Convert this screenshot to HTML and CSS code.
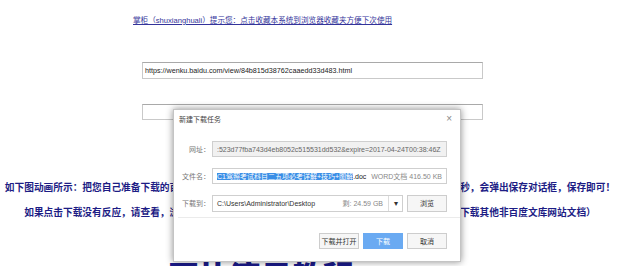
FILE: index.html
```html
<!DOCTYPE html>
<html lang="zh-CN">
<head>
    <meta charset="UTF-8">
    <title>百度文库下载</title>
    <link rel="stylesheet" href="styles.css">
</head>
<body>
    <div class="page">
        <a class="top-tip" href="#">掌柜（shuxianghuali）提示您：点击收藏本系统到浏览器收藏夹方便下次使用</a>

        <div class="url-box">https://wenku.baidu.com/view/84b815d38762caaedd33d483.html</div>
        <div class="result-box"></div>

        <p class="help-line line-one">如下图动画所示：把您自己准备下载的百度文库网址复制粘贴到上面的输入框，然后点击下载按钮，等待几秒，会弹出保存对话框，保存即可！</p>
        <p class="help-line line-two">如果点击下载没有反应，请查看，浏览器是否拦截了弹出窗口或更换其他浏览器重试！（本站暂不支持下载其他非百度文库网站文档）</p>

        <h1 class="big-title">图片演示教程</h1>

        <!-- download dialog lies over the page -->
        <div class="dialog">
            <div class="dialog-head">
                <span class="dialog-title">新建下载任务</span>
                <span class="dialog-close">×</span>
            </div>
            <div class="dialog-body">
                <div class="field-row">
                    <span class="field-label">网址：</span>
                    <div class="field field-readonly">:523d77fba743d4eb8052c515531dd532&amp;expire=2017-04-24T00:38:46Z</div>
                </div>
                <div class="field-row">
                    <span class="field-label">文件名：</span>
                    <div class="field">
                        <span class="file-name"><span class="selected">C1驾照考试科目二五项必考详解+技巧+图解</span>.doc</span>
                        <span class="field-note">WORD文档 416.50 KB</span>
                    </div>
                </div>
                <div class="field-row">
                    <span class="field-label">下载到：</span>
                    <div class="field field-path">
                        <span class="path-text">C:\Users\Administrator\Desktop</span>
                        <span class="field-note">剩: 24.59 GB</span>
                        <span class="path-drop">&#9662;</span>
                    </div>
                    <button class="btn btn-browse">浏览</button>
                </div>
            </div>
            <div class="dialog-foot">
                <button class="btn">下载并打开</button>
                <button class="btn btn-primary">下载</button>
                <button class="btn">取消</button>
            </div>
        </div>
    </div>
</body>
</html>
```

FILE: styles.css
```css
* {
    margin: 0;
    padding: 0;
    box-sizing: border-box;
}

body {
    background: #fff;
    font-family: 'Liberation Sans', 'Noto Sans CJK SC', sans-serif;
    overflow: hidden;
}

.page {
    position: relative;
    width: 620px;
    height: 266px;
    overflow: hidden;
    text-align: center;
}

.top-tip {
    display: block;
    margin-top: 15px;
    padding-left: 133px;
    height: 12px;
    line-height: 12px;
    font-size: 7.6px;
    color: #33339a;
    text-align: left;
    text-decoration: underline;
}

.url-box {
    width: 341px;
    height: 17px;
    margin: 35px 0 0 142px;
    padding-left: 2px;
    border: 1px solid #c9c9c9;
    border-top-color: #a9a9a9;
    font-size: 7.2px;
    line-height: 15px;
    color: #222;
    text-align: left;
}

.result-box {
    width: 341px;
    height: 16px;
    margin: 25px 0 0 142px;
    border: 1px solid #c9c9c9;
    border-top-color: #a9a9a9;
}

.help-line {
    font-family: 'Noto Sans CJK SC', sans-serif;
    font-size: 9.7px;
    font-weight: bold;
    line-height: 25px;
    color: #1d1d85;
    white-space: nowrap;
}

.line-one {
    margin-top: 55px;
}

.big-title {
    margin-top: 35px;
    padding-left: 168px;
    text-align: left;
    font-family: 'Noto Sans CJK SC', sans-serif;
    font-size: 31px;
    font-weight: 900;
    line-height: 30px;
    color: #1a1a8a;
}

/* dialog */
.dialog {
    position: absolute;
    left: 173px;
    top: 109px;
    width: 288px;
    height: 153px;
    background: #fff;
    border: 1px solid #c4c4c4;
    box-shadow: 0 0 7px rgba(0, 0, 0, 0.45);
    text-align: left;
    font-size: 7px;
    color: #333;
}

.dialog-head {
    display: flex;
    justify-content: space-between;
    align-items: center;
    height: 17px;
    padding: 0 8px 0 5px;
}

.dialog-title {
    font-family: 'Noto Sans CJK SC', sans-serif;
    color: #444;
}

.dialog-close {
    font-size: 10px;
    color: #888;
}

.dialog-body {
    display: flex;
    flex-direction: column;
    gap: 11px;
    padding: 14px 13px 0 0;
}

.field-row {
    display: flex;
    align-items: center;
    height: 16px;
}

.field-label {
    width: 36px;
    margin-right: 2px;
    text-align: right;
    font-family: 'Noto Sans CJK SC', sans-serif;
    color: #777;
}

.field {
    flex: 1;
    display: flex;
    justify-content: space-between;
    align-items: center;
    height: 16px;
    padding: 0 4px;
    border: 1px solid #cfcfcf;
    white-space: nowrap;
    overflow: hidden;
}

.field-readonly {
    background: #f1f1f1;
    color: #666;
}

.file-name {
    color: #222;
}

.selected {
    background: #3a8ee6;
    color: #fff;
}

.field-note {
    color: #888;
}

.field-path {
    flex: 0 0 191px;
    padding-right: 0;
    height: 17px;
}

.path-text {
    flex: 1;
    color: #333;
}

.path-drop {
    width: 14px;
    height: 15px;
    margin-left: 5px;
    border-left: 1px solid #dcdcdc;
    text-align: center;
    line-height: 15px;
    font-size: 8px;
    color: #333;
}

.btn {
    width: 40px;
    height: 16px;
    border: 1px solid #cdcdcd;
    background: #f6f6f6;
    font-family: 'Noto Sans CJK SC', sans-serif;
    font-size: 7px;
    color: #333;
}

.btn-browse {
    height: 17px;
    margin-left: 4px;
}

.btn-primary {
    background: #6aaaf2;
    border-color: #6aaaf2;
    color: #fff;
}

.dialog-foot {
    display: flex;
    justify-content: flex-end;
    gap: 4px;
    margin: 6px 0 0 4px;
    padding: 15px 13px 0 0;
    border-top: 1px solid #ebebeb;
}
```
